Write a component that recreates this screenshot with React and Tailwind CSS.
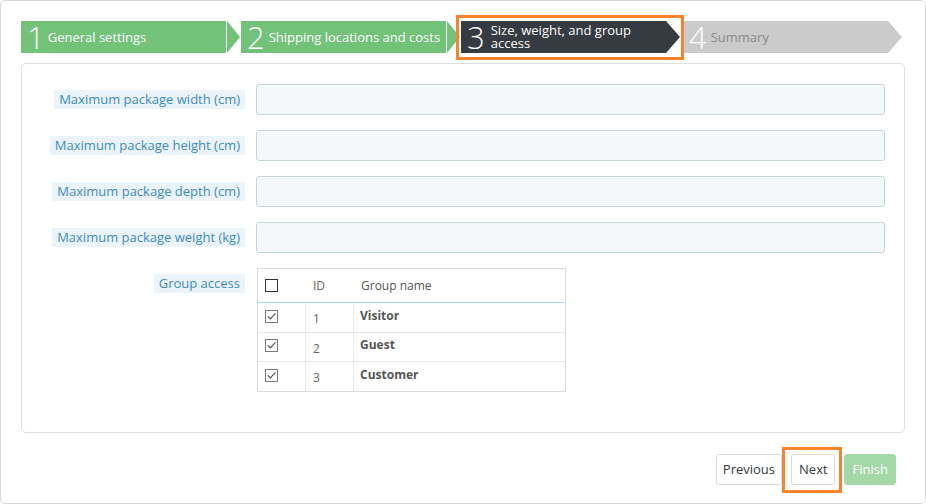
import React from "react";

const font = { fontFamily: '"Open Sans", "Noto Sans", sans-serif' };

function Step({ n, label, variant, gap, twoLine, ml }) {
  const rectBg =
    variant === "done" ? "bg-[#72c279]" : variant === "current" ? "bg-[#363a41]" : "bg-[#cbcbcb]";
  const labelColor = variant === "todo" ? "text-[#8a8a8a]" : "text-white";
  return (
    <div className="flex h-[32px] items-stretch">
      <div className={`${rectBg} flex w-[205px] items-center pl-[6px]`}>
        <span className="text-[31px] font-light leading-none text-white">{n}</span>
        <span
          className={`${labelColor} ${ml} ${twoLine ? "w-[160px] text-[13px] leading-[13px]" : "text-[13px] leading-none"}`}
        >
          {label}
        </span>
      </div>
      <div
        className={`${rectBg} ${gap ? "ml-px w-[13px]" : "w-[14px]"} [clip-path:polygon(0_0,100%_50%,0_100%)]`}
      />
    </div>
  );
}

function Field({ label }) {
  return (
    <div className="flex items-start">
      <div className="flex h-[31px] w-[203px] shrink-0 items-center justify-end">
        <span className="bg-[#ebf4fa] px-[5px] text-[13px] leading-[19px] text-[#3d8bc4]">{label}</span>
      </div>
      <div className="ml-[11px] h-[31px] flex-1 rounded-[3px] border border-[#c7d6db] bg-[#f5f8f9]" />
    </div>
  );
}

function Box({ checked, dark }) {
  return (
    <svg width="14" height="14" viewBox="0 0 14 14" className="block">
      <rect
        x="0.5"
        y="0.5"
        width="12"
        height="12"
        fill="white"
        stroke={dark ? "#333" : "#7a7a7a"}
        strokeWidth="1"
      />
      {checked && (
        <path d="M2.8 6.4 L5.4 9 L10.4 3.4" fill="none" stroke="#555" strokeWidth="1.2" />
      )}
    </svg>
  );
}

const rows = [
  ["1", "Visitor", "h-[29px]"],
  ["2", "Guest", "h-[29px]"],
  ["3", "Customer", "h-[30px]"],
];

export default function App() {
  return (
    <div style={font} className="h-[504px] w-[926px] bg-white">
      <div className="h-[504px] w-[926px] rounded-[5px] border border-[#d6dadd] px-[20px] pt-[20px]">
        <div className="flex gap-px">
          <Step n="1" label="General settings" variant="done" gap ml="ml-[3px]" />
          <Step n="2" label="Shipping locations and costs" variant="done" gap ml="ml-[4px]" />
          <div className="relative">
            <Step n="3" label="Size, weight, and group access" variant="current" twoLine ml="ml-[6px]" />
            <div className="pointer-events-none absolute -bottom-[7px] -left-[5px] -right-[4px] -top-[6px] border-[3px] border-[#f9822c]" />
          </div>
          <div className="ml-[2px]">
            <Step n="4" label="Summary" variant="todo" ml="ml-[4px]" />
          </div>
        </div>

        <div className="mt-[10px] rounded-[5px] border border-[#dcdfe1] pb-[40px] pl-[20px] pr-[19px] pt-[20px]">
          <div className="flex flex-col gap-[15px]">
            <Field label="Maximum package width (cm)" />
            <Field label="Maximum package height (cm)" />
            <Field label="Maximum package depth (cm)" />
            <Field label="Maximum package weight (kg)" />
            <div className="flex items-start">
              <div className="flex h-[31px] w-[203px] shrink-0 items-center justify-end">
                <span className="bg-[#ebf4fa] px-[5px] text-[13px] leading-[19px] text-[#3d8bc4]">
                  Group access
                </span>
              </div>
              <div className="ml-[12px] w-[309px] border border-[#dcdcdc] text-[12px] text-[#555]">
                <div className="flex h-[34px] items-center border-b border-[#a6d4ec] pt-[1px]">
                  <div className="w-[48px] pl-[7px]">
                    <Box dark />
                  </div>
                  <div className="w-[48px] pl-[7px] text-[#666]">ID</div>
                  <div className="flex-1 pl-[7px] text-[#555]">Group name</div>
                </div>
                {rows.map(([id, name, h], i) => (
                  <div
                    key={id}
                    className={`flex ${h} items-stretch ${i > 0 ? "border-t border-[#e6e6e6]" : ""}`}
                  >
                    <div className="flex w-[48px] items-center border-r border-[#eaeaea] pb-[2px] pl-[7px]">
                      <Box checked />
                    </div>
                    <div className="flex w-[48px] items-center border-r border-[#eaeaea] pl-[7px] pt-[3px] text-[#666]">
                      {id}
                    </div>
                    <div className="flex flex-1 items-center pb-[4px] pl-[6px] font-bold text-[#555]">
                      {name}
                    </div>
                  </div>
                ))}
              </div>
            </div>
          </div>
        </div>

        <div className="mr-[9px] mt-[21px] flex justify-end gap-[9px]">
          <button className="h-[31px] rounded-[3px] border border-[#d6dadd] bg-white px-[6px] text-[13px] text-[#363a41]">
            Previous
          </button>
          <div className="relative">
            <button className="h-[31px] rounded-[3px] border border-[#d6dadd] bg-white pl-[7px] pr-[6px] text-[13px] text-[#363a41]">
              Next
            </button>
            <div className="pointer-events-none absolute -bottom-[8px] -left-[9px] -right-[7px] -top-[7px] border-[3px] border-[#f9822c]" />
          </div>
          <button className="h-[31px] rounded-[3px] border border-[#a4d8a8] bg-[#a4d8a8] pl-[8px] pr-[7px] text-[13px] text-white">
            Finish
          </button>
        </div>
      </div>
    </div>
  );
}
